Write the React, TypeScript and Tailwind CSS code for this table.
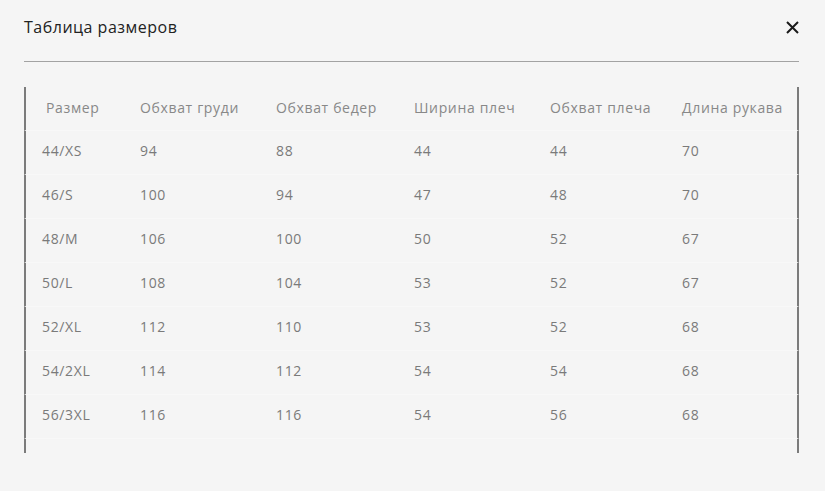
const headers = ["Размер", "Обхват груди", "Обхват бедер", "Ширина плеч", "Обхват плеча", "Длина рукава"];

const rows = [
    ["44/XS", "94", "88", "44", "44", "70"],
    ["46/S", "100", "94", "47", "48", "70"],
    ["48/M", "106", "100", "50", "52", "67"],
    ["50/L", "108", "104", "53", "52", "67"],
    ["52/XL", "112", "110", "53", "52", "68"],
    ["54/2XL", "114", "112", "54", "54", "68"],
    ["56/3XL", "116", "116", "54", "56", "68"],
];

const colWidths = ["w-[114px]", "w-[136px]", "w-[138px]", "w-[136px]", "w-[132px]", "flex-1"];

const App = () => {
    return (
        <div className="min-h-[491px] bg-[#f5f5f5] font-['Open_Sans',sans-serif] pl-6">
            <div className="w-[775px]">
                <div className="h-[61px] flex items-center justify-between pb-[7px]">
                    <h2 className="text-[16px] text-[#222] tracking-[0.5px]">Таблица размеров</h2>
                    <button type="button" className="w-[14px] h-[14px] flex items-center justify-center">
                        <svg width="13" height="13" viewBox="0 0 13 13" fill="none">
                            <path d="M1 1L12 12M12 1L1 12" stroke="#1a1a1a" strokeWidth="2" />
                        </svg>
                    </button>
                </div>
                <div className="h-px bg-[#a3a3a3]" />

                <div className="mt-[25px] text-[14px] text-[#7a7a7a] tracking-[0.65px]">
                    <div className="flex items-center h-[44px] pb-[2px] border-x-2 border-x-[#7b7b7b] border-b border-b-[#f8f8f8] text-[#888]">
                        {headers.map((h, i) => (
                            <div key={h} className={`${colWidths[i]} ${i === 0 ? "pl-5" : ""}`}>
                                {h}
                            </div>
                        ))}
                    </div>
                    {rows.map((r) => (
                        <div key={r[0]} className="flex items-center h-[44px] pb-[4px] border-x-2 border-x-[#7b7b7b] border-b border-b-[#f8f8f8]">
                            {r.map((c, i) => (
                                <div key={i} className={`${colWidths[i]} ${i === 0 ? "pl-4" : ""}`}>
                                    {c}
                                </div>
                            ))}
                        </div>
                    ))}
                    <div className="h-[14px] border-x-2 border-x-[#7b7b7b]" />
                </div>
            </div>
        </div>
    );
};

export default App;
